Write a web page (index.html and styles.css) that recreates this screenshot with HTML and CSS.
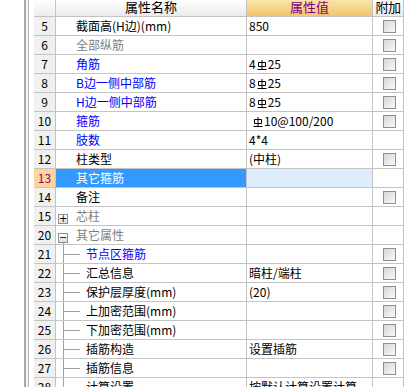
FILE: index.html
```html
<!DOCTYPE html>
<html lang="zh">
<head>
    <meta charset="UTF-8">
    <title>属性编辑</title>
    <link rel="stylesheet" href="styles.css">
</head>
<body>
    <div class="splitter"></div>
    <table class="grid">
        <thead>
            <tr>
                <th class="num w-num"></th>
                <th class="h-name w-name">属性名称</th>
                <th class="h-value w-value">属性值</th>
                <th class="h-extra w-extra">附加</th>
            </tr>
        </thead>
        <tbody>
            <tr>
                <td class="num">5</td>
                <td class="name">截面高(H边)(mm)</td>
                <td class="value">850</td>
                <td class="extra"><span class="chk"></span></td>
            </tr>
            <tr>
                <td class="num">6</td>
                <td class="name grey">全部纵筋</td>
                <td class="value"></td>
                <td class="extra"><span class="chk"></span></td>
            </tr>
            <tr>
                <td class="num">7</td>
                <td class="name blue">角筋</td>
                <td class="value">4<svg class="rebar" viewBox="0 0 10 12"><path d="M5 1V10M1.5 3.5H8.5V7.5H1.5ZM0.5 10.5H9.5"/></svg>25</td>
                <td class="extra"><span class="chk"></span></td>
            </tr>
            <tr>
                <td class="num">8</td>
                <td class="name blue">B边一侧中部筋</td>
                <td class="value">8<svg class="rebar" viewBox="0 0 10 12"><path d="M5 1V10M1.5 3.5H8.5V7.5H1.5ZM0.5 10.5H9.5"/></svg>25</td>
                <td class="extra"><span class="chk"></span></td>
            </tr>
            <tr>
                <td class="num">9</td>
                <td class="name blue">H边一侧中部筋</td>
                <td class="value">8<svg class="rebar" viewBox="0 0 10 12"><path d="M5 1V10M1.5 3.5H8.5V7.5H1.5ZM0.5 10.5H9.5"/></svg>25</td>
                <td class="extra"><span class="chk"></span></td>
            </tr>
            <tr>
                <td class="num">10</td>
                <td class="name blue">箍筋</td>
                <td class="value"><svg class="rebar lead" viewBox="0 0 10 12"><path d="M5 1V10M1.5 3.5H8.5V7.5H1.5ZM0.5 10.5H9.5"/></svg>10@100/200</td>
                <td class="extra"><span class="chk"></span></td>
            </tr>
            <tr>
                <td class="num">11</td>
                <td class="name blue">肢数</td>
                <td class="value">4*4</td>
                <td class="extra"></td>
            </tr>
            <tr>
                <td class="num">12</td>
                <td class="name">柱类型</td>
                <td class="value">(中柱)</td>
                <td class="extra"><span class="chk"></span></td>
            </tr>
            <tr class="selected">
                <td class="num">13</td>
                <td class="name">其它箍筋</td>
                <td class="value"></td>
                <td class="extra"></td>
            </tr>
            <tr>
                <td class="num">14</td>
                <td class="name">备注</td>
                <td class="value"></td>
                <td class="extra"><span class="chk"></span></td>
            </tr>
            <tr>
                <td class="num">15</td>
                <td class="name grey"><span class="toggle">+</span>芯柱</td>
                <td class="value"></td>
                <td class="extra"></td>
            </tr>
            <tr>
                <td class="num">20</td>
                <td class="name grey branch-start"><span class="toggle">−</span>其它属性</td>
                <td class="value"></td>
                <td class="extra"></td>
            </tr>
            <tr>
                <td class="num">21</td>
                <td class="name blue branch">节点区箍筋</td>
                <td class="value"></td>
                <td class="extra"><span class="chk"></span></td>
            </tr>
            <tr>
                <td class="num">22</td>
                <td class="name branch">汇总信息</td>
                <td class="value">暗柱/端柱</td>
                <td class="extra"><span class="chk"></span></td>
            </tr>
            <tr>
                <td class="num">23</td>
                <td class="name branch">保护层厚度(mm)</td>
                <td class="value">(20)</td>
                <td class="extra"><span class="chk"></span></td>
            </tr>
            <tr>
                <td class="num">24</td>
                <td class="name branch">上加密范围(mm)</td>
                <td class="value"></td>
                <td class="extra"><span class="chk"></span></td>
            </tr>
            <tr>
                <td class="num">25</td>
                <td class="name branch">下加密范围(mm)</td>
                <td class="value"></td>
                <td class="extra"><span class="chk"></span></td>
            </tr>
            <tr>
                <td class="num">26</td>
                <td class="name branch">插筋构造</td>
                <td class="value">设置插筋</td>
                <td class="extra"><span class="chk"></span></td>
            </tr>
            <tr>
                <td class="num">27</td>
                <td class="name branch">插筋信息</td>
                <td class="value"></td>
                <td class="extra"><span class="chk"></span></td>
            </tr>
            <tr>
                <td class="num">28</td>
                <td class="name branch">计算设置</td>
                <td class="value">按默认计算设置计算</td>
                <td class="extra"></td>
            </tr>
        </tbody>
    </table>
</body>
</html>
```

FILE: styles.css
```css
html, body {
    margin: 0;
    background: #fff;
    overflow: hidden;
}
body {
    display: flex;
    align-items: flex-start;
    font-family: "Noto Sans CJK SC", "DejaVu Sans", sans-serif;
    font-size: 12px;
    color: #000;
    height: 387px;
}
.splitter {
    width: 2px;
    height: 387px;
    margin-left: 24px;
    margin-right: 5px;
    border-left: 2px solid #a8a8a8;
    border-right: 1px solid #b8b8b8;
    background: #f4f4f4;
    flex: none;
}
.grid {
    border-collapse: separate;
    border-spacing: 0;
    table-layout: fixed;
    width: 370px;
    flex: none;
}
.grid th, .grid td {
    box-sizing: border-box;
    border-right: 1px solid #c4c4c4;
    border-bottom: 1px solid #c4c4c4;
    padding: 0;
    white-space: nowrap;
    overflow: hidden;
    font-weight: normal;
}
.grid td {
    height: 19px;
    line-height: 18px;
}
.grid th {
    height: 17px;
    line-height: 14px;
    vertical-align: top;
    font-size: 13px;
}
.w-num { width: 22px; }
.w-name { width: 191px; }
.w-value { width: 126px; }
.w-extra { width: 31px; }

th.num {
    background: linear-gradient(#ffffff, #ececec);
}
.h-name {
    background: linear-gradient(#ffffff, #eaeaea);
    text-align: center;
}
.h-value {
    background: linear-gradient(#fbe4ab, #f1c46b);
    color: #800080;
    text-align: center;
}
.h-extra {
    background: linear-gradient(#ffffff, #ebebeb);
    text-align: center;
    letter-spacing: -0.5px;
}

td.num {
    background: #f0f0f0;
    text-align: center;
}
td.name {
    padding-left: 20px;
}
td.value {
    padding-left: 2px;
}
.grey { color: #808080; }
.blue { color: #0000ff; }

.rebar {
    width: 10px;
    height: 12px;
    margin: 0 1px;
    vertical-align: -2px;
    fill: none;
    stroke: #000;
    stroke-width: 1;
}
.rebar.lead { margin-left: 4px; }

.chk {
    display: block;
    width: 11px;
    height: 11px;
    margin: 0 auto;
    border: 1px solid #8f8f8f;
    background: linear-gradient(135deg, #d6d6d6, #fafafa);
    position: relative;
    left: 1px;
}

.toggle {
    display: inline-block;
    box-sizing: border-box;
    width: 10px;
    height: 10px;
    margin-left: -18px;
    margin-right: 8px;
    border: 1px solid #909090;
    background: linear-gradient(#ffffff, #dcdcdc);
    color: #000;
    font-family: "DejaVu Sans", sans-serif;
    font-size: 10px;
    line-height: 7px;
    text-align: center;
    vertical-align: -1px;
}

td.branch {
    padding-left: 30px;
    background:
        linear-gradient(#a0a0a0, #a0a0a0) 7px 0 / 1px 100% no-repeat,
        linear-gradient(#a0a0a0, #a0a0a0) 8px 9px / 16px 1px no-repeat;
}
td.branch-start {
    background: linear-gradient(#a0a0a0, #a0a0a0) 7px 14px / 1px 100% no-repeat;
}

.selected td.num {
    background: #ffd496;
    color: #800080;
}
.selected td.name {
    background: #3399ff;
    color: #fff;
}
.selected td.value {
    background: #ddedfd;
}
```
